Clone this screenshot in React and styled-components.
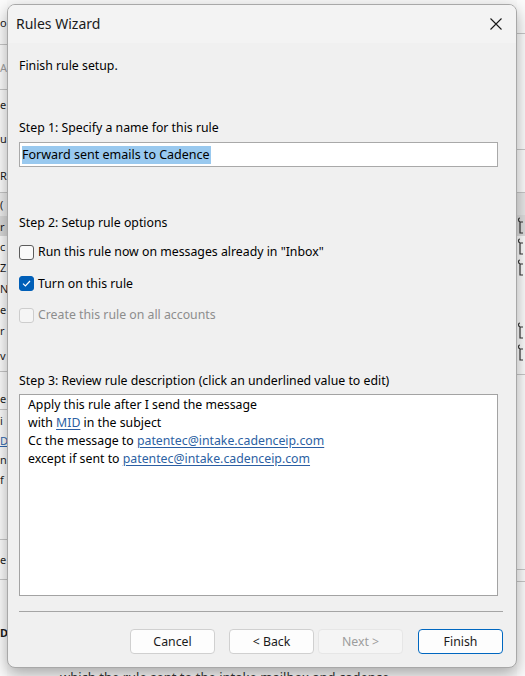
import React from "react";
import styled, { createGlobalStyle } from "styled-components";

const GlobalStyle = createGlobalStyle`
  html, body {
    margin: 0;
    padding: 0;
  }
  body {
    width: 525px;
    height: 676px;
    overflow: hidden;
    font-family: "Noto Sans", "Open Sans", sans-serif;
    color: #000;
  }
`;

const Screen = styled.div`
  position: relative;
  width: 525px;
  height: 676px;
  overflow: hidden;
  background: #f8f8f8;
  display: flex;
  font-size: 12.3px;
`;

/* ---------- outlook window behind the dialog ---------- */

const Pane = styled.div`
  width: ${(p) => p.$width}px;
  margin-left: ${(p) => (p.$right ? "auto" : "0")};
  display: flex;
  flex-direction: column;
  overflow: hidden;
  background: #fbfbfb;
`;

const PaneRow = styled.div`
  height: ${(p) => p.$h}px;
  flex: none;
  box-sizing: border-box;
  display: flex;
  align-items: center;
  white-space: nowrap;
  background: ${(p) => p.$bg || "transparent"};
  border-bottom: ${(p) => (p.$line ? "1px solid #c6c6c6" : "none")};
  color: ${(p) => p.$color || "#1b1b1b"};
  font-weight: ${(p) => (p.$bold ? 700 : 400)};
  text-decoration: ${(p) => (p.$link ? "underline" : "none")};
  font-size: 11px;
`;

const Wrench = () => (
  <svg width="8" height="18" viewBox="0 0 8 18">
    <path
      d="M3 1 C1 1 1 4 3 5 L3 16 L6 16 M3 5 L6 5"
      fill="none"
      stroke="#333"
      strokeWidth="1.2"
    />
  </svg>
);

const leftRows = [
  { h: 45, t: "o", line: true },
  { h: 45, t: "A", color: "#a0a0a0", line: true },
  { h: 28, t: "e" },
  { h: 40, t: "u" },
  { h: 35, t: "R", line: true },
  { h: 23, t: "(", bg: "#ececec" },
  { h: 20, t: "r", bg: "#d9d9d9" },
  { h: 20, t: "c" },
  { h: 22, t: "Z" },
  { h: 20, t: "N" },
  { h: 22, t: "e" },
  { h: 20, t: "r" },
  { h: 32, t: "v", line: true },
  { h: 16, t: "" },
  { h: 22, t: "e", line: true },
  { h: 20, t: "i" },
  { h: 20, t: "D", color: "#2f66ad", link: true },
  { h: 18, t: "n" },
  { h: 22, t: "f" },
  { h: 50, t: "", line: true },
  { h: 40, t: "e", line: true },
  { h: 40, t: "" },
  { h: 25, t: "D", bold: true },
  { h: 31, t: "" },
];

const rightRows = [
  { h: 34, line: true },
  { h: 116, line: true },
  { h: 43, line: true },
  { h: 22, bg: "#e6e6e6" },
  { h: 21, w: true, bg: "#dcdcdc" },
  { h: 21, w: true },
  { h: 21, w: true },
  { h: 42 },
  { h: 22, w: true },
  { h: 22, w: true },
  { h: 11, line: true },
  { h: 195, line: true },
  { h: 12, line: true },
  { h: 94 },
];

const BottomText = styled.div`
  position: absolute;
  left: 60px;
  top: 668px;
  font-size: 13px;
  color: #333;
  white-space: nowrap;
`;

/* ---------- the dialog ---------- */

const Window = styled.div`
  position: absolute;
  top: 4px;
  left: 7px;
  width: 510px;
  height: 664px;
  box-sizing: border-box;
  border: 1px solid #a8a8a8;
  border-radius: 8px;
  background: #f0f0f0;
  box-shadow: 0 6px 16px rgba(0, 0, 0, 0.32);
  display: flex;
  flex-direction: column;
  overflow: hidden;
`;

const TitleBar = styled.div`
  height: 38px;
  flex: none;
  display: flex;
  align-items: center;
  justify-content: space-between;
  padding-left: 8px;
  background: #f3f3f3;
`;

const Title = styled.span`
  font-size: 14px;
  color: #1a1a1a;
  margin-top: -1px;
`;

const CloseButton = styled.div`
  width: 40px;
  height: 38px;
  display: flex;
  align-items: center;
  justify-content: center;
`;

const Body = styled.div`
  flex: 1;
  display: flex;
  flex-direction: column;
  padding: 15px 13px 13px 11px;
`;

const Text = styled.div`
  line-height: 16px;
  height: 16px;
  margin-top: ${(p) => p.$mt || 0}px;
  color: ${(p) => (p.$disabled ? "#8d8d8d" : "#000")};
  white-space: nowrap;
`;

const NameInput = styled.div`
  margin-top: 6px;
  margin-right: 5px;
  height: 25px;
  box-sizing: border-box;
  border: 1px solid #a9a9a9;
  background: #fff;
  padding: 0 2px;
  display: flex;
  align-items: center;
`;

const Selected = styled.span`
  background: #99c9ef;
  line-height: 18px;
  font-size: 12.5px;
  padding-right: 1px;
`;

const Options = styled.div`
  margin-top: 13px;
  display: flex;
  flex-direction: column;
  gap: 15.5px;
`;

const Option = styled.label`
  display: flex;
  align-items: center;
  gap: 4px;
  height: 16px;
  line-height: 16px;
  color: ${(p) => (p.$disabled ? "#8d8d8d" : "#000")};
`;

const Box = styled.span`
  width: 15px;
  height: 15px;
  box-sizing: border-box;
  border-radius: 3px;
  display: flex;
  align-items: center;
  justify-content: center;
  border: 1px solid
    ${(p) =>
      p.$checked ? "#005fb8" : p.$disabled ? "#cdcdcd" : "#5c5c5c"};
  background: ${(p) =>
    p.$checked ? "#005fb8" : p.$disabled ? "#f5f5f5" : "#fafafa"};
`;

const DescBox = styled.div`
  margin-top: 5px;
  margin-right: 5px;
  height: 202px;
  box-sizing: border-box;
  border: 1px solid #a3a3a3;
  background: #fff;
  padding: 1px 8px;
  line-height: 18px;
`;

const Link = styled.span`
  color: #2c5fa3;
  text-decoration: underline;
  text-underline-offset: 2px;
`;

const Separator = styled.div`
  margin-top: 15px;
  height: 1px;
  background: #a5a5a5;
`;

const ButtonRow = styled.div`
  margin-top: 17px;
  display: flex;
  justify-content: flex-end;
`;

const Button = styled.div`
  width: 85px;
  height: 25px;
  box-sizing: border-box;
  margin-right: ${(p) => p.$mr || 0}px;
  border-radius: 4px;
  border: 1px solid
    ${(p) => (p.$primary ? "#0067c0" : p.$disabled ? "#e6e6e6" : "#d0d0d0")};
  background: ${(p) => (p.$disabled ? "#f5f5f5" : "#fdfdfd")};
  color: ${(p) => (p.$disabled ? "#9d9d9d" : "#1a1a1a")};
  display: flex;
  align-items: center;
  justify-content: center;
`;

function Checkbox({ checked, disabled }) {
  return (
    <Box $checked={checked} $disabled={disabled}>
      {checked && (
        <svg width="9" height="7" viewBox="0 0 9 7">
          <path
            d="M1 3.6 L3.4 6 L8 1"
            fill="none"
            stroke="#fff"
            strokeWidth="1.2"
          />
        </svg>
      )}
    </Box>
  );
}

export default function App() {
  return (
    <Screen>
      <GlobalStyle />
      <Pane $width={7}>
        {leftRows.map((r, i) => (
          <PaneRow
            key={i}
            $h={r.h}
            $bg={r.bg}
            $line={r.line}
            $color={r.color}
            $bold={r.bold}
            $link={r.link}
          >
            {r.t}
          </PaneRow>
        ))}
      </Pane>
      <Pane $width={8} $right>
        {rightRows.map((r, i) => (
          <PaneRow key={i} $h={r.h} $bg={r.bg} $line={r.line}>
            {r.w && <Wrench />}
          </PaneRow>
        ))}
      </Pane>
      <BottomText>
        which the rule sent to the intake mailbox and cadence
      </BottomText>

      <Window>
        <TitleBar>
          <Title>Rules Wizard</Title>
          <CloseButton>
            <svg width="12" height="12" viewBox="0 0 12 12">
              <path
                d="M0.5 0.5 L11.5 11.5 M11.5 0.5 L0.5 11.5"
                stroke="#1a1a1a"
                strokeWidth="1.1"
              />
            </svg>
          </CloseButton>
        </TitleBar>
        <Body>
          <Text>Finish rule setup.</Text>

          <Text $mt={46}>Step 1: Specify a name for this rule</Text>
          <NameInput>
            <Selected>Forward sent emails to Cadence</Selected>
          </NameInput>

          <Text $mt={48}>Step 2: Setup rule options</Text>
          <Options>
            <Option>
              <Checkbox />
              Run this rule now on messages already in "Inbox"
            </Option>
            <Option>
              <Checkbox checked />
              Turn on this rule
            </Option>
            <Option $disabled>
              <Checkbox disabled />
              Create this rule on all accounts
            </Option>
          </Options>

          <Text $mt={50}>
            Step 3: Review rule description (click an underlined value to edit)
          </Text>
          <DescBox>
            <div>Apply this rule after I send the message</div>
            <div>
              with <Link>MID</Link> in the subject
            </div>
            <div>
              Cc the message to <Link>patentec@intake.cadenceip.com</Link>
            </div>
            <div>
              except if sent to <Link>patentec@intake.cadenceip.com</Link>
            </div>
          </DescBox>

          <Separator />
          <ButtonRow>
            <Button $mr={14}>Cancel</Button>
            <Button $mr={4}>&lt; Back</Button>
            <Button $mr={15} $disabled>
              Next &gt;
            </Button>
            <Button $primary>Finish</Button>
          </ButtonRow>
        </Body>
      </Window>
    </Screen>
  );
}
